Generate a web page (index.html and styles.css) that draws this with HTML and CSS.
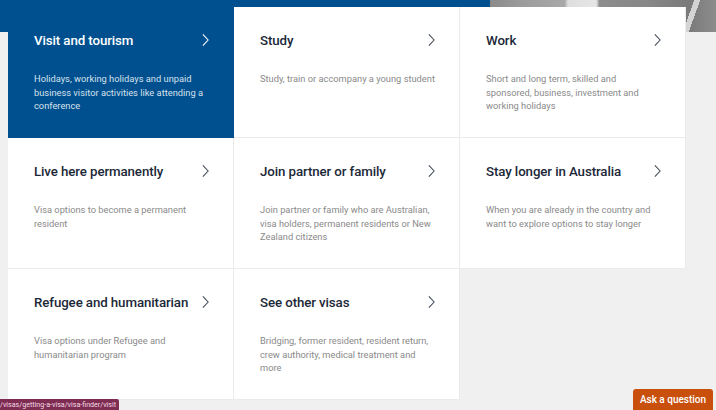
FILE: index.html
```html
<!DOCTYPE html>
<html lang="en">
<head>
<meta charset="utf-8">
<title>Visa finder</title>
<link rel="stylesheet" href="styles.css">
</head>
<body>
<div class="banner">
  <div class="banner-blue"></div>
  <div class="banner-photo"></div>
</div>
<main class="grid">
  <a class="card card-active" href="#">
    <div class="card-head"><h2>Visit and tourism</h2><svg class="chev" viewBox="0 0 8 16"><path d="M1 1.5 L7 8 L1 14.5"/></svg></div>
    <p>Holidays, working holidays and unpaid business visitor activities like attending a conference</p>
  </a>
  <a class="card" href="#">
    <div class="card-head"><h2>Study</h2><svg class="chev" viewBox="0 0 8 16"><path d="M1 1.5 L7 8 L1 14.5"/></svg></div>
    <p>Study, train or accompany a young student</p>
  </a>
  <a class="card" href="#">
    <div class="card-head"><h2>Work</h2><svg class="chev" viewBox="0 0 8 16"><path d="M1 1.5 L7 8 L1 14.5"/></svg></div>
    <p>Short and long term, skilled and sponsored, business, investment and working holidays</p>
  </a>
  <a class="card" href="#">
    <div class="card-head"><h2>Live here permanently</h2><svg class="chev" viewBox="0 0 8 16"><path d="M1 1.5 L7 8 L1 14.5"/></svg></div>
    <p>Visa options to become a permanent resident</p>
  </a>
  <a class="card" href="#">
    <div class="card-head"><h2>Join partner or family</h2><svg class="chev" viewBox="0 0 8 16"><path d="M1 1.5 L7 8 L1 14.5"/></svg></div>
    <p>Join partner or family who are Australian, visa holders, permanent residents or New Zealand citizens</p>
  </a>
  <a class="card" href="#">
    <div class="card-head"><h2>Stay longer in Australia</h2><svg class="chev" viewBox="0 0 8 16"><path d="M1 1.5 L7 8 L1 14.5"/></svg></div>
    <p>When you are already in the country and want to explore options to stay longer</p>
  </a>
  <a class="card" href="#">
    <div class="card-head"><h2>Refugee and humanitarian</h2><svg class="chev" viewBox="0 0 8 16"><path d="M1 1.5 L7 8 L1 14.5"/></svg></div>
    <p>Visa options under Refugee and humanitarian program</p>
  </a>
  <a class="card" href="#">
    <div class="card-head"><h2>See other visas</h2><svg class="chev" viewBox="0 0 8 16"><path d="M1 1.5 L7 8 L1 14.5"/></svg></div>
    <p>Bridging, former resident, resident return, crew authority, medical treatment and more</p>
  </a>
</main>
<div class="status">/visas/getting-a-visa/visa-finder/visit</div>
<button class="ask">Ask a question</button>
</body>
</html>
```
FILE: styles.css
```css
* { box-sizing: border-box; }
html, body { margin: 0; padding: 0; }
body {
  background: #f0f0f0;
  font-family: Roboto, "Liberation Sans", sans-serif;
  width: 716px;
  height: 410px;
  overflow: hidden;
}
.banner {
  display: flex;
  height: 32px;
}
.banner-blue {
  width: 490px;
  background: #00508f;
}
.banner-photo {
  flex: 1;
  background:
    linear-gradient(110deg, transparent 0 86%, #d4d4d4 86% 88.5%, transparent 88.5%),
    linear-gradient(90deg, #8a8a8a 0, #9c9c9c 15%, #a8a8a8 33%, #dedede 34.5%, #e6e6e6 47%, #8c8c8c 48.5%, #878787 70%, #7a7a7a 88%, #8c8c8c 100%);
}
.grid {
  display: grid;
  grid-template-columns: 226px 226px 226px;
  grid-auto-rows: 131px;
  margin: -25px 0 0 8px;
  position: relative;
}
.card {
  background: #fff;
  border-right: 1px solid #ebebeb;
  border-bottom: 1px solid #ebebeb;
  padding: 25px 0 0 26px;
  text-decoration: none;
  color: #1b2838;
  display: flex;
  flex-direction: column;
}
.card-active {
  background: #00508f;
  border-color: #00508f;
  color: #fff;
}
.card-head {
  display: flex;
  align-items: center;
  justify-content: space-between;
  height: 16px;
  padding-right: 24px;
}
.card h2 {
  margin: 0;
  font-size: 13.3px;
  font-weight: 500;
  letter-spacing: -0.1px;
}
.chev {
  width: 7px;
  height: 14px;
  fill: none;
  stroke: #404a55;
  stroke-width: 1.2;
}
.card-active .chev { stroke: #fff; }
.card p {
  margin: 24px 0 0;
  width: 177px;
  font-size: 9.3px;
  line-height: 13.5px;
  color: #8a8a8a;
}
.card-active p { color: #d6e0ec; }
.status {
  position: absolute;
  left: 0;
  top: 399px;
  height: 11px;
  padding: 0 3px 0 0;
  background: #7e2c52;
  color: #f2dbe4;
  font-size: 7.1px;
  line-height: 11px;
  border-top-right-radius: 2px;
}
.ask {
  position: absolute;
  left: 633px;
  top: 389px;
  width: 80px;
  height: 21px;
  border: none;
  border-radius: 3px 3px 0 0;
  background: #c94f0c;
  color: #fff;
  font-family: Roboto, "Liberation Sans", sans-serif;
  font-size: 10px;
  font-weight: 500;
  padding: 0;
}
```
